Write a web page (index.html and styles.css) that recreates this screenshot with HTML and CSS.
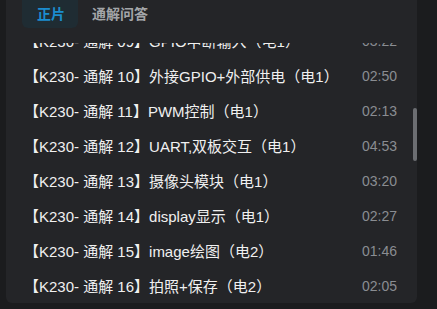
FILE: index.html
```html
<!DOCTYPE html>
<html lang="zh-CN">
<head>
    <meta charset="UTF-8">
    <title>正片</title>
    <link rel="stylesheet" href="styles.css">
</head>
<body>
    <div class="panel">
        <div class="tabs">
            <div class="tab active">正片</div>
            <div class="tab">通解问答</div>
        </div>

        <div class="list">
            <div class="list-inner">
                <div class="row"><span class="title">【K230- 通解 09】GPIO中断输入（电1）</span><span class="time">03:22</span></div>
                <div class="row"><span class="title">【K230- 通解 10】外接GPIO+外部供电（电1）</span><span class="time">02:50</span></div>
                <div class="row"><span class="title">【K230- 通解 11】PWM控制（电1）</span><span class="time">02:13</span></div>
                <div class="row"><span class="title">【K230- 通解 12】UART,双板交互（电1）</span><span class="time">04:53</span></div>
                <div class="row"><span class="title">【K230- 通解 13】摄像头模块（电1）</span><span class="time">03:20</span></div>
                <div class="row"><span class="title">【K230- 通解 14】display显示（电1）</span><span class="time">02:27</span></div>
                <div class="row"><span class="title">【K230- 通解 15】image绘图（电2）</span><span class="time">01:46</span></div>
                <div class="row"><span class="title">【K230- 通解 16】拍照+保存（电2）</span><span class="time">02:05</span></div>
            </div>
            <div class="scroll-thumb"></div>
        </div>
    </div>
</body>
</html>
```

FILE: styles.css
```css
* {
    margin: 0;
    padding: 0;
    box-sizing: border-box;
}

body {
    background: #1b1c1e;
    font-family: 'Liberation Sans', 'Noto Sans CJK SC', sans-serif;
    color: #e8e8e8;
    height: 309px;
    overflow: hidden;
}

.panel {
    margin-left: 6px;
    width: 411px;
    height: 303px;
    background: #242528;
    border-radius: 0 0 6px 6px;
    display: flex;
    flex-direction: column;
}

.tabs {
    display: flex;
    padding-left: 16px;
    height: 43px;
    flex-shrink: 0;
}

.tab {
    height: 28px;
    padding: 0 14px;
    font-size: 14px;
    font-weight: bold;
    line-height: 28px;
    color: #a3a5a8;
}

.tab.active {
    width: 56px;
    padding: 0 0 0 15px;
    background: #1f2c33;
    color: #1b8dcf;
    border-radius: 0 0 6px 6px;
}

.list {
    flex: 1;
    position: relative;
    overflow: hidden;
}

.list-inner {
    margin-top: -20px;
}

.row {
    height: 35px;
    display: flex;
    align-items: center;
    justify-content: space-between;
    padding: 0 20px 0 18px;
}

.title {
    font-size: 15px;
    color: #f0f0f0;
    white-space: nowrap;
}

.time {
    font-size: 14px;
    color: #8a8d92;
}

.scroll-thumb {
    position: absolute;
    right: 0;
    top: 65px;
    width: 4px;
    height: 53px;
    border-radius: 2px;
    background: #6c6e72;
}
```
